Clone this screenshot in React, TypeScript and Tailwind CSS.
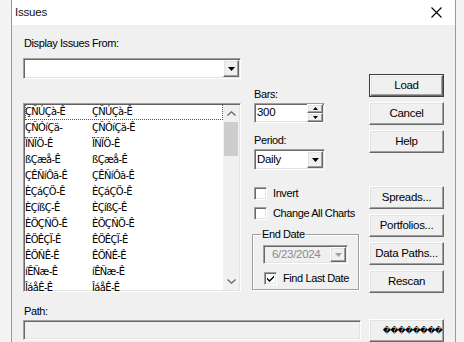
import React from "react";

const sunken =
  "border border-t-[#a0a0a0] border-l-[#a0a0a0] border-r-white border-b-white shadow-[inset_1px_1px_0_#696969,inset_-1px_-1px_0_#e3e3e3]";
const raised =
  "border border-t-white border-l-white border-r-[#696969] border-b-[#696969] shadow-[inset_-1px_-1px_0_#a0a0a0,inset_1px_1px_0_#e3e3e3] bg-[#f0f0f0]";

const rows: [string, string][] = [
  ["ÇÑÚÇà-Ê", "ÇÑÚÇà-Ê"],
  ["ÇÑÓíÇä-", "ÇÑÓíÇä-Ê"],
  ["ÏÑÏÖ-Ê", "ÏÑÏÖ-Ê"],
  ["ßÇæå-Ê", "ßÇæå-Ê"],
  ["ÇÊÑíÔã-Ê", "ÇÊÑíÔã-Ê"],
  ["ÈÇáÇÖ-Ê", "ÈÇáÇÖ-Ê"],
  ["ÈÇíßÇ-Ê", "ÈÇíßÇ-Ê"],
  ["ÈÖÇÑÖ-Ê", "ÈÖÇÑÖ-Ê"],
  ["ÊÖÊÇÏ-Ê", "ÊÖÊÇÏ-Ê"],
  ["ÊÖÑÊ-Ê", "ÊÖÑÊ-Ê"],
  ["íÊÑæ-Ê", "íÊÑæ-Ê"],
  ["ÎáåÊ-Ê", "ÎáåÊ-Ê"],
];

function DownArrow({ color = "#000" }: { color?: string }) {
  return (
    <svg width="7" height="4" viewBox="0 0 7 4">
      <path d="M0 0h7L3.5 4z" fill={color} />
    </svg>
  );
}

function DropBtn({ disabled = false, h = "h-[17px]" }: { disabled?: boolean; h?: string }) {
  return (
    <div className={`${raised} w-[16px] ${h} flex items-center justify-center shrink-0`}>
      <DownArrow color={disabled ? "#a0a0a0" : "#000"} />
    </div>
  );
}

function Btn({ label, def = false, className = "" }: { label: string; def?: boolean; className?: string }) {
  const inner = (
    <div className={`${raised} w-full h-full flex items-center justify-center text-[11.5px] tracking-[-0.3px] text-black`}>
      {label}
    </div>
  );
  return (
    <div className={`w-[75px] h-[23px] ${className}`}>
      {def ? <div className="w-full h-full border border-[#3c3c3c]">{inner}</div> : inner}
    </div>
  );
}

function Check({ label, checked = false, className = "" }: { label: string; checked?: boolean; className?: string }) {
  return (
    <div className={`flex items-center h-[13px] ${className}`}>
      <div className={`${sunken} w-[13px] h-[13px] bg-white flex items-center justify-center shrink-0`}>
        {checked && (
          <svg width="7" height="7" viewBox="0 0 7 7">
            <path d="M0 2.5 L2.5 5 L7 0.5 L7 2.5 L2.5 7 L0 4.5z" fill="#000" />
          </svg>
        )}
      </div>
      <span className="ml-[6px] text-[11px] tracking-[-0.4px] leading-[13px] text-black whitespace-nowrap">{label}</span>
    </div>
  );
}

const lbl = "h-[13px] text-[11px] tracking-[-0.4px] leading-[13px] text-black";

export default function App() {
  return (
    <div className="w-[464px] h-[342px] overflow-hidden bg-[#f4f4f4] font-['Liberation_Sans',Arial,sans-serif]">
      <div className="ml-[11px] w-[445px] h-[342px] border-l border-r border-[#9a9a9a] bg-[#f0f0f0] flex flex-col">
        {/* Title bar */}
        <div className="h-[25px] bg-white flex items-center justify-between shrink-0">
          <span className="ml-[3px] text-[11.5px] tracking-[-0.2px] text-[#111]">Issues</span>
          <svg className="mr-[13px]" width="11" height="11" viewBox="0 0 11 11">
            <path d="M0.5 0.5 L10.5 10.5 M10.5 0.5 L0.5 10.5" stroke="#000" strokeWidth="1.1" />
          </svg>
        </div>

        {/* Body */}
        <div className="flex pl-[11px]">
          {/* Left column */}
          <div className="w-[218px] flex flex-col">
            <div className={`mt-[12px] pl-[1px] ${lbl}`}>Display Issues From:</div>
            <div className={`${sunken} mt-[8px] h-[21px] bg-white flex items-center justify-end pr-[1px]`}>
              <DropBtn />
            </div>
            <div className={`${sunken} mt-[24px] h-[189px] bg-white flex overflow-hidden`}>
              <div className="flex-1 overflow-hidden pl-[1px] font-['DejaVu_Sans_Condensed','Liberation_Sans_Narrow',sans-serif] text-[11px] tracking-[-0.6px] text-black">
                {rows.map((r, i) => (
                  <div
                    key={i}
                    className={`flex h-[16px] items-center ${
                      i === 0 ? "outline outline-1 outline-dotted outline-[#555] -outline-offset-1" : ""
                    }`}
                  >
                    <span className="w-[67px] whitespace-nowrap">{r[0]}</span>
                    <span className="whitespace-nowrap">{r[1]}</span>
                  </div>
                ))}
              </div>
              <div className="w-[16px] mr-[1px] my-[1px] bg-[#f0f0f0] flex flex-col justify-between">
                <div className="h-[17px] flex items-center justify-center">
                  <svg width="9" height="5" viewBox="0 0 9 5">
                    <path d="M0.5 4.5 L4.5 0.8 L8.5 4.5" stroke="#606060" strokeWidth="1.2" fill="none" />
                  </svg>
                </div>
                <div className="flex-1 flex flex-col">
                  <div className="mx-[1px] h-[34px] bg-[#cdcdcd]" />
                </div>
                <div className="h-[17px] flex items-center justify-center">
                  <svg width="9" height="5" viewBox="0 0 9 5">
                    <path d="M0.5 0.5 L4.5 4.2 L8.5 0.5" stroke="#606060" strokeWidth="1.2" fill="none" />
                  </svg>
                </div>
              </div>
            </div>
          </div>

          {/* Middle column */}
          <div className="ml-[11px] w-[107px] flex flex-col">
            <div className={`mt-[63px] pl-[2px] ${lbl}`}>Bars:</div>
            <div className={`${sunken} ml-[2px] mt-[2px] w-[71px] h-[20px] bg-white flex items-center justify-between`}>
              <span className="pl-[2px] text-[11.5px] tracking-[-0.3px] text-black">300</span>
              <div className="flex flex-col mr-[1px]">
                <div className={`${raised} w-[16px] h-[9px] flex items-center justify-center`}>
                  <svg width="5" height="3" viewBox="0 0 5 3">
                    <path d="M0 3h5L2.5 0z" fill="#000" />
                  </svg>
                </div>
                <div className={`${raised} w-[16px] h-[9px] flex items-center justify-center`}>
                  <svg width="5" height="3" viewBox="0 0 5 3">
                    <path d="M0 0h5L2.5 3z" fill="#000" />
                  </svg>
                </div>
              </div>
            </div>
            <div className={`mt-[11px] pl-[2px] ${lbl}`}>Period:</div>
            <div className={`${sunken} ml-[2px] mt-[2px] w-[71px] h-[21px] bg-white flex items-center justify-between pr-[1px]`}>
              <span className="pl-[2px] text-[11.5px] tracking-[-0.3px] text-black">Daily</span>
              <DropBtn />
            </div>
            <Check label="Invert" className="mt-[17px] ml-[2px]" />
            <Check label="Change All Charts" className="mt-[7px] ml-[2px]" />
            <div className="relative mt-[14px] h-[56px] border border-[#a0a0a0] shadow-[1px_1px_0_white,inset_1px_1px_0_white]">
              <span className="absolute -top-[8px] left-[8px] px-[1px] bg-[#f0f0f0] text-[11px] tracking-[-0.4px] leading-[14px] text-black">
                End Date
              </span>
              <div className={`${sunken} ml-[10px] mt-[10px] w-[85px] h-[19px] bg-[#f0f0f0] flex items-center justify-between pr-[1px]`}>
                <span className="pl-[8px] text-[11.5px] tracking-[-0.3px] text-[#8a8a8a]">6/23/2024</span>
                <DropBtn disabled h="h-[15px]" />
              </div>
              <Check label="Find Last Date" checked className="mt-[8px] ml-[11px]" />
            </div>
          </div>

          {/* Right column buttons */}
          <div className="ml-[10px] flex flex-col">
            <Btn label="Load" def className="mt-[49px]" />
            <Btn label="Cancel" className="mt-[5px]" />
            <Btn label="Help" className="mt-[5px]" />
            <Btn label="Spreads..." className="mt-[33px]" />
            <Btn label="Portfolios..." className="mt-[5px]" />
            <Btn label="Data Paths..." className="mt-[5px]" />
            <Btn label="Rescan" className="mt-[5px]" />
          </div>
        </div>

        {/* Path row */}
        <div className="flex pl-[11px] items-end mt-[12px]">
          <div className="w-[338px] flex flex-col">
            <div className={`pl-[1px] ${lbl}`}>Path:</div>
            <div className={`${sunken} mt-[2px] h-[20px] bg-[#f0f0f0]`} />
          </div>
          <div className="ml-[8px] w-[75px] h-[23px] mb-[-2px]">
            <div className={`${raised} w-full h-full flex items-center justify-end overflow-hidden pr-[1px] text-[8px] text-black font-['DejaVu_Sans',sans-serif] tracking-[-0.8px]`}>
              {"\uFFFD\uFFFD\uFFFD\uFFFD\uFFFD\uFFFD\uFFFD\uFFFD"}
            </div>
          </div>
        </div>
      </div>
    </div>
  );
}
